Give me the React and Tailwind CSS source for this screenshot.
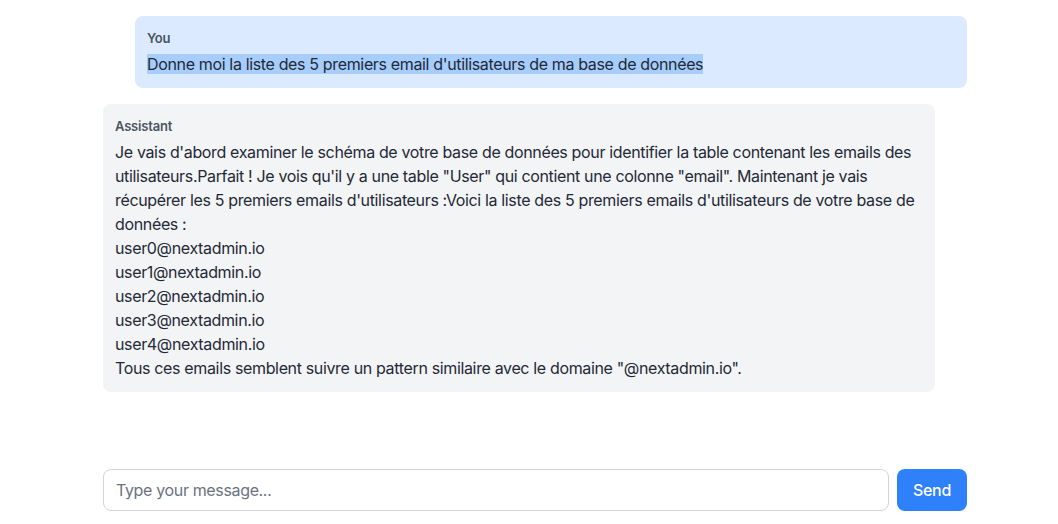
export default function App() {
  const emails = [
    "user0@nextadmin.io",
    "user1@nextadmin.io",
    "user2@nextadmin.io",
    "user3@nextadmin.io",
    "user4@nextadmin.io",
  ];

  return (
    <div className="h-screen bg-white flex flex-col font-['Inter',sans-serif] text-[#1f2937]">
      {/* messages */}
      <div className="flex-1 pt-4 w-[864px] ml-[103px] flex flex-col gap-4">
        <div className="ml-8 bg-[#dbeafe] rounded-lg px-3 py-3">
          <div className="text-[13px] leading-5 font-semibold tracking-[-0.2px] text-[#4b5563] mb-1">You</div>
          <p className="text-base leading-6 tracking-[-0.35px]">
            <span className="bg-[#a6cdfb]">
              Donne moi la liste des 5 premiers email d'utilisateurs de ma base de données
            </span>
          </p>
        </div>

        <div className="mr-8 bg-[#f3f4f6] rounded-lg px-3 py-3">
          <div className="text-[13px] leading-5 font-semibold tracking-[-0.2px] text-[#4b5563] mb-1">Assistant</div>
          <div className="text-base leading-6 tracking-[-0.35px]">
            <p>
              Je vais d'abord examiner le schéma de votre base de données pour identifier la table contenant les emails des
              utilisateurs.Parfait ! Je vois qu'il y a une table "User" qui contient une colonne "email". Maintenant je vais
              récupérer les 5 premiers emails d'utilisateurs :Voici la liste des 5 premiers emails d'utilisateurs de votre base de
              données :
            </p>
            {emails.map((e) => (
              <p key={e}>{e}</p>
            ))}
            <p>Tous ces emails semblent suivre un pattern similaire avec le domaine "@nextadmin.io".</p>
          </div>
        </div>
      </div>

      {/* input */}
      <div className="w-[864px] ml-[103px] pb-[13px] flex gap-2">
        <input
          type="text"
          placeholder="Type your message..."
          className="flex-1 h-[42px] border border-[#d1d5db] rounded-lg px-3 text-base tracking-[-0.35px] text-[#1f2937] placeholder:text-[#6b7280] outline-none"
        />
        <button className="h-[42px] w-[70px] rounded-lg bg-[#2f81fb] text-white text-base font-medium tracking-[-0.3px]">
          Send
        </button>
      </div>
    </div>
  );
}
